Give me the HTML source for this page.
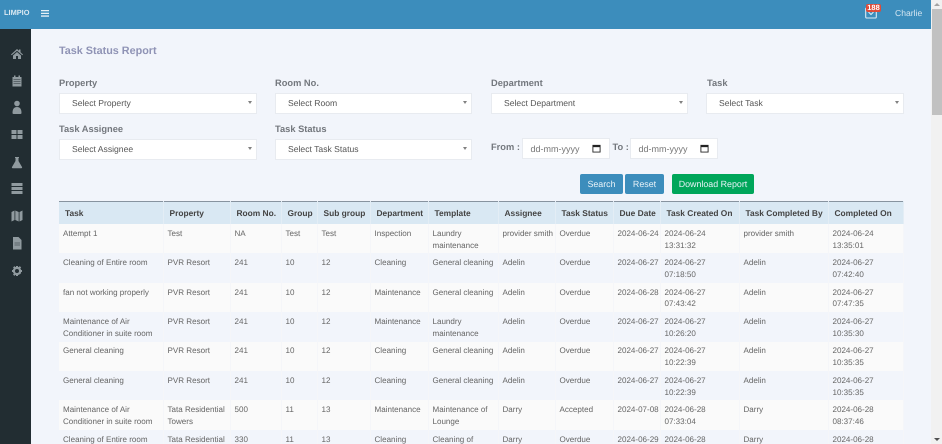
<!DOCTYPE html>
<html><head><meta charset="utf-8">
<style>
*{box-sizing:border-box}
html,body{margin:0;padding:0;width:942px;height:444px;overflow:hidden;background:#f2f5fb;font-family:"Liberation Sans",sans-serif;text-rendering:geometricPrecision}
.a{position:absolute;white-space:nowrap}
#wrap{position:absolute;left:0;top:0;width:942px;height:444px;overflow:hidden;filter:blur(.35px)}
.top{left:0;top:0;width:931px;height:29px;background:#3c8dbc}
.side{left:0;top:29px;width:31px;height:415px;background:#222d32}
.lab{font-size:9.3px;font-weight:bold;color:#73777d;line-height:12px}
.sel{height:21px;background:#fff;border:1px solid #e8ebf0;font-size:8.6px;color:#555;line-height:19.5px;padding-left:12px}
.sel:after{content:"";position:absolute;right:4px;top:7px;border-left:2.5px solid transparent;border-right:2.5px solid transparent;border-top:3px solid #808080}
.date{height:21px;background:#fff;border:1px solid #e8ebf0;font-size:9px;color:#777;line-height:20px;padding-left:7.5px;top:137.5px}
.date svg{position:absolute;right:8px;top:5.5px}
.btn{top:174px;height:20px;border-radius:2px;color:#e8f2f8;font-size:8.9px;line-height:20px;text-align:center}
table{position:absolute;left:59px;top:201px;width:844px;border-collapse:collapse;table-layout:fixed;border-top:1.5px solid #87939f;font-size:8.05px;color:#666}
th{height:22.5px;background:#d9e8f3;color:#444;font-weight:bold;text-align:left;padding:0 0 0 6px;white-space:nowrap;font-size:8.4px;border-right:1px solid #e3edf5}
td{height:29.4px;vertical-align:top;padding:3.8px 0 0 4px;line-height:11.8px;white-space:nowrap;border-right:1px solid #f5f6f9}
tr.o td{background:#fafafa}
tr.e td{background:#f2f5fb}
</style></head><body>
<div id="wrap">
<div class="a top"></div>
<div class="a side"></div>
<div class="a" style="left:4px;top:8px;font-size:7.4px;font-weight:bold;color:#dbe9f2;line-height:10px">LIMPIO</div>
<svg class="a" style="left:41px;top:10px" width="8" height="7"><path d="M0 0h8v1.300H0zM0 2.700h8v1.300H0zM0 5.400h8v1.300H0z" fill="#e6f0f6"/></svg>
<svg class="a" style="left:865px;top:6px" width="13" height="13" viewBox="0 0 13 13"><rect x=".7" y="2" width="10.600" height="10" rx="1" fill="none" stroke="#dcebf4" stroke-width="1.100"/><path d="M3.500 6l2.500 2.500L8.500 6" fill="none" stroke="#dcebf4" stroke-width="1.100"/></svg>
<div class="a" style="left:866px;top:4px;width:15px;height:8px;background:#dd4b39;border-radius:2px;color:#fff;font-size:7.500px;font-weight:bold;line-height:8px;text-align:center">188</div>
<div class="a" style="left:895px;top:8px;font-size:8.600px;color:#d5e6f1;line-height:11px">Charlie</div>

<svg class="a" style="left:11px;top:48px" width="12" height="232" viewBox="0 0 12 232" fill="#909a9f">
<path d="M0 6.500L6 1l2 1.800V1.500h1.500v2.800L12 6.500l-.7.8L6 2.700.7 7.300zM2 7.500L6 4l4 3.500V11H7V8H5v3H2z"/>
<path d="M1.500 29h9v9.500h-9zM3 27.500h1.500V30H3zM7.500 27.500H9V30H7.500z"/><path d="M2.500 31.500h7M2.500 33.500h7M2.500 35.500h7" stroke="#4b565b" stroke-width=".7"/>
<circle cx="6" cy="55.500" r="2.800"/><path d="M1.500 65c0-4 1.500-6 4.500-6s4.500 2 4.500 6c0 .5-.5 1-1 1h-7c-.5 0-1-.5-1-1z"/>
<path d="M.5 82h5v4h-5zM6.500 82h5v4h-5zM.5 87h5v4h-5zM6.500 87h5v4h-5z"/>
<path d="M4 109h4v1H7.500v3l3.500 6c.3.8 0 1.200-.8 1.200H1.800c-.8 0-1.100-.4-.8-1.200L4.500 113v-3H4z"/>
<path d="M.5 135h11v3h-11zM.5 139h11v3h-11zM.5 143h11v3h-11z"/>
<path d="M.5 164l3-1.500V172l-3 1.500zM4.300 162.500l3.400 1.500v9.500l-3.400-1.500zM8.500 164l3-1.500V172l-3 1.500z"/>
<path d="M2 189h5.500l3 3v9.500H2z"/><path d="M3.500 195h5.500M3.500 197h5.500" stroke="#4b565b" stroke-width=".7"/>
<circle cx="6" cy="223" r="3.100" fill="none" stroke="#909a9f" stroke-width="2.200"/><path d="M5 218h2v2H5zM5 226h2v2H5zM1 222h2v2H1zM9 222h2v2H9zM2 219.500l1.400-1.400 1.400 1.400-1.400 1.400zM7.400 225l1.400-1.400 1.400 1.400-1.400 1.400zM2 226.500l1.400 1.400 1.400-1.400-1.400-1.400zM7.400 219.500l1.400 1.400 1.400-1.400-1.400-1.400z"/>
</svg>

<div class="a" style="left:59px;top:44.500px;font-size:10.800px;font-weight:bold;color:#8f93b5;line-height:13px">Task Status Report</div>

<div class="a lab" style="left:59px;top:77px">Property</div>
<div class="a lab" style="left:275px;top:77px">Room No.</div>
<div class="a lab" style="left:491px;top:77px">Department</div>
<div class="a lab" style="left:707px;top:77px">Task</div>
<div class="a sel" style="left:59px;top:92.500px;width:198px">Select Property</div>
<div class="a sel" style="left:275px;top:92.500px;width:197px">Select Room</div>
<div class="a sel" style="left:491px;top:92.500px;width:197px">Select Department</div>
<div class="a sel" style="left:706px;top:92.500px;width:198px">Select Task</div>

<div class="a lab" style="left:59px;top:123px">Task Assignee</div>
<div class="a lab" style="left:275px;top:123px">Task Status</div>
<div class="a sel" style="left:59px;top:139px;width:198px">Select Assignee</div>
<div class="a sel" style="left:275px;top:139px;width:197px">Select Task Status</div>

<div class="a lab" style="left:491px;top:141px">From :</div>
<div class="a date" style="left:522px;width:88px">dd-mm-yyyy<svg width="9" height="9" viewBox="0 0 10 10"><path d="M1 1.500h8v7.500H1z" fill="none" stroke="#222" stroke-width="1"/><path d="M1 1.500h8V3.500H1z" fill="#222"/></svg></div>
<div class="a lab" style="left:612.500px;top:141px">To :</div>
<div class="a date" style="left:630px;width:88px">dd-mm-yyyy<svg width="9" height="9" viewBox="0 0 10 10"><path d="M1 1.500h8v7.500H1z" fill="none" stroke="#222" stroke-width="1"/><path d="M1 1.500h8V3.500H1z" fill="#222"/></svg></div>

<div class="a btn" style="left:580px;width:43px;background:#3c8dbc">Search</div>
<div class="a btn" style="left:625px;width:39px;background:#3c8dbc">Reset</div>
<div class="a btn" style="left:672px;width:82px;background:#00a65a">Download Report</div>

<table>
<colgroup><col style="width:104px"><col style="width:67px"><col style="width:51px"><col style="width:36px"><col style="width:53px"><col style="width:58px"><col style="width:70px"><col style="width:57px"><col style="width:58px"><col style="width:47px"><col style="width:79px"><col style="width:89px"><col style="width:75px"></colgroup>
<tr><th>Task</th><th>Property</th><th>Room No.</th><th>Group</th><th>Sub group</th><th>Department</th><th>Template</th><th>Assignee</th><th>Task Status</th><th>Due Date</th><th>Task Created On</th><th>Task Completed By</th><th>Completed On</th></tr>
<tr class="o"><td>Attempt 1</td><td>Test</td><td>NA</td><td>Test</td><td>Test</td><td>Inspection</td><td>Laundry<br>maintenance</td><td>provider smith</td><td>Overdue</td><td>2024-06-24</td><td>2024-06-24<br>13:31:32</td><td>provider smith</td><td>2024-06-24<br>13:35:01</td></tr>
<tr class="e"><td>Cleaning of Entire room</td><td>PVR Resort</td><td>241</td><td>10</td><td>12</td><td>Cleaning</td><td>General cleaning</td><td>Adelin</td><td>Overdue</td><td>2024-06-27</td><td>2024-06-27<br>07:18:50</td><td>Adelin</td><td>2024-06-27<br>07:42:40</td></tr>
<tr class="o"><td>fan not working properly</td><td>PVR Resort</td><td>241</td><td>10</td><td>12</td><td>Maintenance</td><td>General cleaning</td><td>Adelin</td><td>Overdue</td><td>2024-06-28</td><td>2024-06-27<br>07:43:42</td><td>Adelin</td><td>2024-06-27<br>07:47:35</td></tr>
<tr class="e"><td>Maintenance of Air<br>Conditioner in suite room</td><td>PVR Resort</td><td>241</td><td>10</td><td>12</td><td>Maintenance</td><td>Laundry<br>maintenance</td><td>Adelin</td><td>Overdue</td><td>2024-06-27</td><td>2024-06-27<br>10:26:20</td><td>Adelin</td><td>2024-06-27<br>10:35:30</td></tr>
<tr class="o"><td>General cleaning</td><td>PVR Resort</td><td>241</td><td>10</td><td>12</td><td>Cleaning</td><td>General cleaning</td><td>Adelin</td><td>Overdue</td><td>2024-06-27</td><td>2024-06-27<br>10:22:39</td><td>Adelin</td><td>2024-06-27<br>10:35:35</td></tr>
<tr class="e"><td>General cleaning</td><td>PVR Resort</td><td>241</td><td>10</td><td>12</td><td>Cleaning</td><td>General cleaning</td><td>Adelin</td><td>Overdue</td><td>2024-06-27</td><td>2024-06-27<br>10:22:39</td><td>Adelin</td><td>2024-06-27<br>10:35:35</td></tr>
<tr class="o"><td>Maintenance of Air<br>Conditioner in suite room</td><td>Tata Residential<br>Towers</td><td>500</td><td>11</td><td>13</td><td>Maintenance</td><td>Maintenance of<br>Lounge</td><td>Darry</td><td>Accepted</td><td>2024-07-08</td><td>2024-06-28<br>07:33:04</td><td>Darry</td><td>2024-06-28<br>08:37:46</td></tr>
<tr class="e"><td>Cleaning of Entire room</td><td>Tata Residential</td><td>330</td><td>11</td><td>13</td><td>Cleaning</td><td>Cleaning of</td><td>Darry</td><td>Overdue</td><td>2024-06-29</td><td>2024-06-28</td><td>Darry</td><td>2024-06-28</td></tr>
</table>

<div class="a" style="left:931px;top:0;width:11px;height:444px;background:#f1f1f1"></div>
<div class="a" style="left:932px;top:9px;width:10px;height:106px;background:#c1c1c1"></div>
<div class="a" style="left:934px;top:3px;border-left:3px solid transparent;border-right:3px solid transparent;border-bottom:3px solid #a3a3a3"></div>
<div class="a" style="left:934px;top:438px;border-left:3px solid transparent;border-right:3px solid transparent;border-top:3px solid #505050"></div>
</div>
</body></html>
